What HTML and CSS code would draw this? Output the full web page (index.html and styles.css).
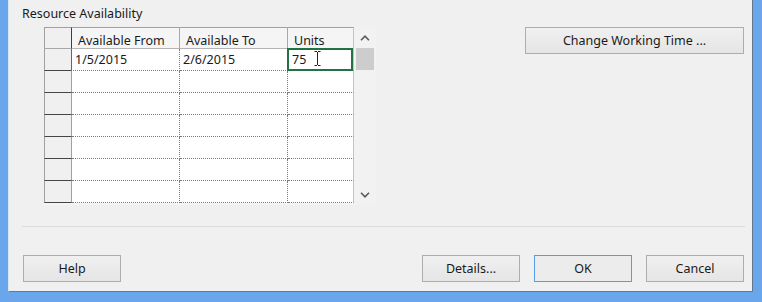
FILE: index.html
```html
<!DOCTYPE html>
<html lang="en">
<head>
    <meta charset="UTF-8">
    <title>Resource Information</title>
    <link rel="stylesheet" href="styles.css">
</head>
<body>
    <div class="window">
        <div class="group-label">Resource Availability</div>

        <div class="group">
            <div class="sheet">
                <div class="cells">
                    <div class="cell corner"></div>
                    <div class="cell head">Available From</div>
                    <div class="cell head">Available To</div>
                    <div class="cell head last">Units</div>

                    <div class="cell rowhead"></div>
                    <div class="cell data prev">1/5/2015</div>
                    <div class="cell data">2/6/2015</div>
                    <div class="cell data last active">75
                        <svg class="ibeam" width="7" height="15" viewBox="0 0 7 15">
                            <path d="M0.5 0.5h2.5M4 0.5h2.5M3.5 1v13M0.5 14.5h2.5M4 14.5h2.5" stroke="#222" stroke-width="1" fill="none"/>
                        </svg>
                    </div>

                    <div class="cell rowhead"></div><div class="cell data"></div><div class="cell data"></div><div class="cell data last"></div>
                    <div class="cell rowhead"></div><div class="cell data"></div><div class="cell data"></div><div class="cell data last"></div>
                    <div class="cell rowhead"></div><div class="cell data"></div><div class="cell data"></div><div class="cell data last"></div>
                    <div class="cell rowhead"></div><div class="cell data"></div><div class="cell data"></div><div class="cell data last"></div>
                    <div class="cell rowhead"></div><div class="cell data"></div><div class="cell data"></div><div class="cell data last"></div>
                    <div class="cell rowhead"></div><div class="cell data"></div><div class="cell data"></div><div class="cell data last"></div>
                </div>
                <div class="scrollbar">
                    <div class="arrow">
                        <svg width="10" height="6" viewBox="0 0 10 6"><path d="M1 5.2L5 1.2L9 5.2" stroke="#5a5a5a" stroke-width="1.6" fill="none"/></svg>
                    </div>
                    <div class="thumb"></div>
                    <div class="track"></div>
                    <div class="arrow">
                        <svg width="10" height="6" viewBox="0 0 10 6"><path d="M1 0.8L5 4.8L9 0.8" stroke="#5a5a5a" stroke-width="1.6" fill="none"/></svg>
                    </div>
                </div>
            </div>

            <button class="btn wide">Change Working Time ...</button>
        </div>

        <div class="separator"></div>

        <div class="actions">
            <button class="btn">Help</button>
            <button class="btn push">Details...</button>
            <button class="btn default">OK</button>
            <button class="btn">Cancel</button>
        </div>
    </div>
</body>
</html>
```

FILE: styles.css
```css
body {
    margin: 0;
    padding: 0;
    background-color: #6aa6ec;
    font-family: "Noto Sans", "Open Sans", sans-serif;
    font-size: 12.5px;
    color: #1a1a1a;
    height: 302px;
    overflow: hidden;
}

.window {
    margin-left: 8px;
    width: 745px;
    height: 292px;
    box-sizing: border-box;
    background-color: #f0f0f0;
    border-left: 1px solid #d8e6f4;
    border-right: 1px solid #66788c;
    border-bottom: 1px solid #66788c;
    display: flex;
    flex-direction: column;
}

.group-label {
    margin: 6px 0 0 13px;
    line-height: 16px;
}

.group {
    display: flex;
    align-items: flex-start;
    margin: 5px 8px 0 35px;
}

.sheet {
    display: flex;
    height: 178px;
    background-color: #f4f4f4;
}

.cells {
    display: grid;
    grid-template-columns: 28px 108px 108px 66px;
    grid-template-rows: 22px repeat(7, 22px);
    align-self: flex-start;
}

.cell {
    box-sizing: border-box;
    line-height: 16px;
    white-space: nowrap;
    position: relative;
}

.corner {
    background-color: #f0f0f0;
    border-left: 1px solid #a0a0a0;
    border-top: 1px solid #a0a0a0;
    border-right: 1px solid #404040;
    border-bottom: 1px solid #a8a8a8;
}

.head {
    background-color: #f5f5f5;
    border-top: 1px solid #a0a0a0;
    border-right: 1px solid #a8a8a8;
    border-bottom: 1px solid #b4b4b4;
    padding: 5px 0 0 6px;
}

.rowhead {
    background-color: #f0f0f0;
    border-left: 1px solid #a0a0a0;
    border-right: 1px solid #a0a0a0;
    border-bottom: 1px solid #454545;
}

.data {
    background-color: #fff;
    border-right: 1px dotted #7a7a7a;
    border-bottom: 1px dotted #7a7a7a;
    padding: 3px 0 0 3px;
}

.data.last {
    border-right: 1px solid #c4c4c4;
}

.head.last {
    border-right: 1px solid #c4c4c4;
}

.prev {
    border-left: 1px solid #3f7f4a;
    margin-left: -1px;
}

.active {
    padding-left: 4px;
}

.active::after {
    content: "";
    position: absolute;
    top: -1px;
    left: -1px;
    right: 0;
    bottom: -1px;
    border: 2px solid #217346;
}

.ibeam {
    position: absolute;
    left: 26px;
    top: 2px;
}

.scrollbar {
    width: 22px;
    display: flex;
    flex-direction: column;
    background-color: #f2f2f2;
}

.arrow {
    height: 21px;
    display: flex;
    align-items: center;
    justify-content: center;
}

.thumb {
    height: 22px;
    margin: 0 2px;
    background-color: #cdcdcd;
}

.track {
    flex: 1;
}

.btn {
    font-family: inherit;
    font-size: 12.5px;
    color: #1a1a1a;
    height: 27px;
    width: 98px;
    padding: 0;
    border: 1px solid #adadad;
    background: linear-gradient(#f0f0f0, #e5e5e5);
    line-height: 25px;
}

.wide {
    width: 219px;
    margin-left: auto;
}

.separator {
    height: 1px;
    background-color: #dadada;
    margin: 21px 7px 0 13px;
}

.actions {
    display: flex;
    gap: 14px;
    margin: 28px 8px 0 14px;
}

.push {
    margin-left: auto;
}

.default {
    border-color: #569de5;
    background: #ececec;
}
```
